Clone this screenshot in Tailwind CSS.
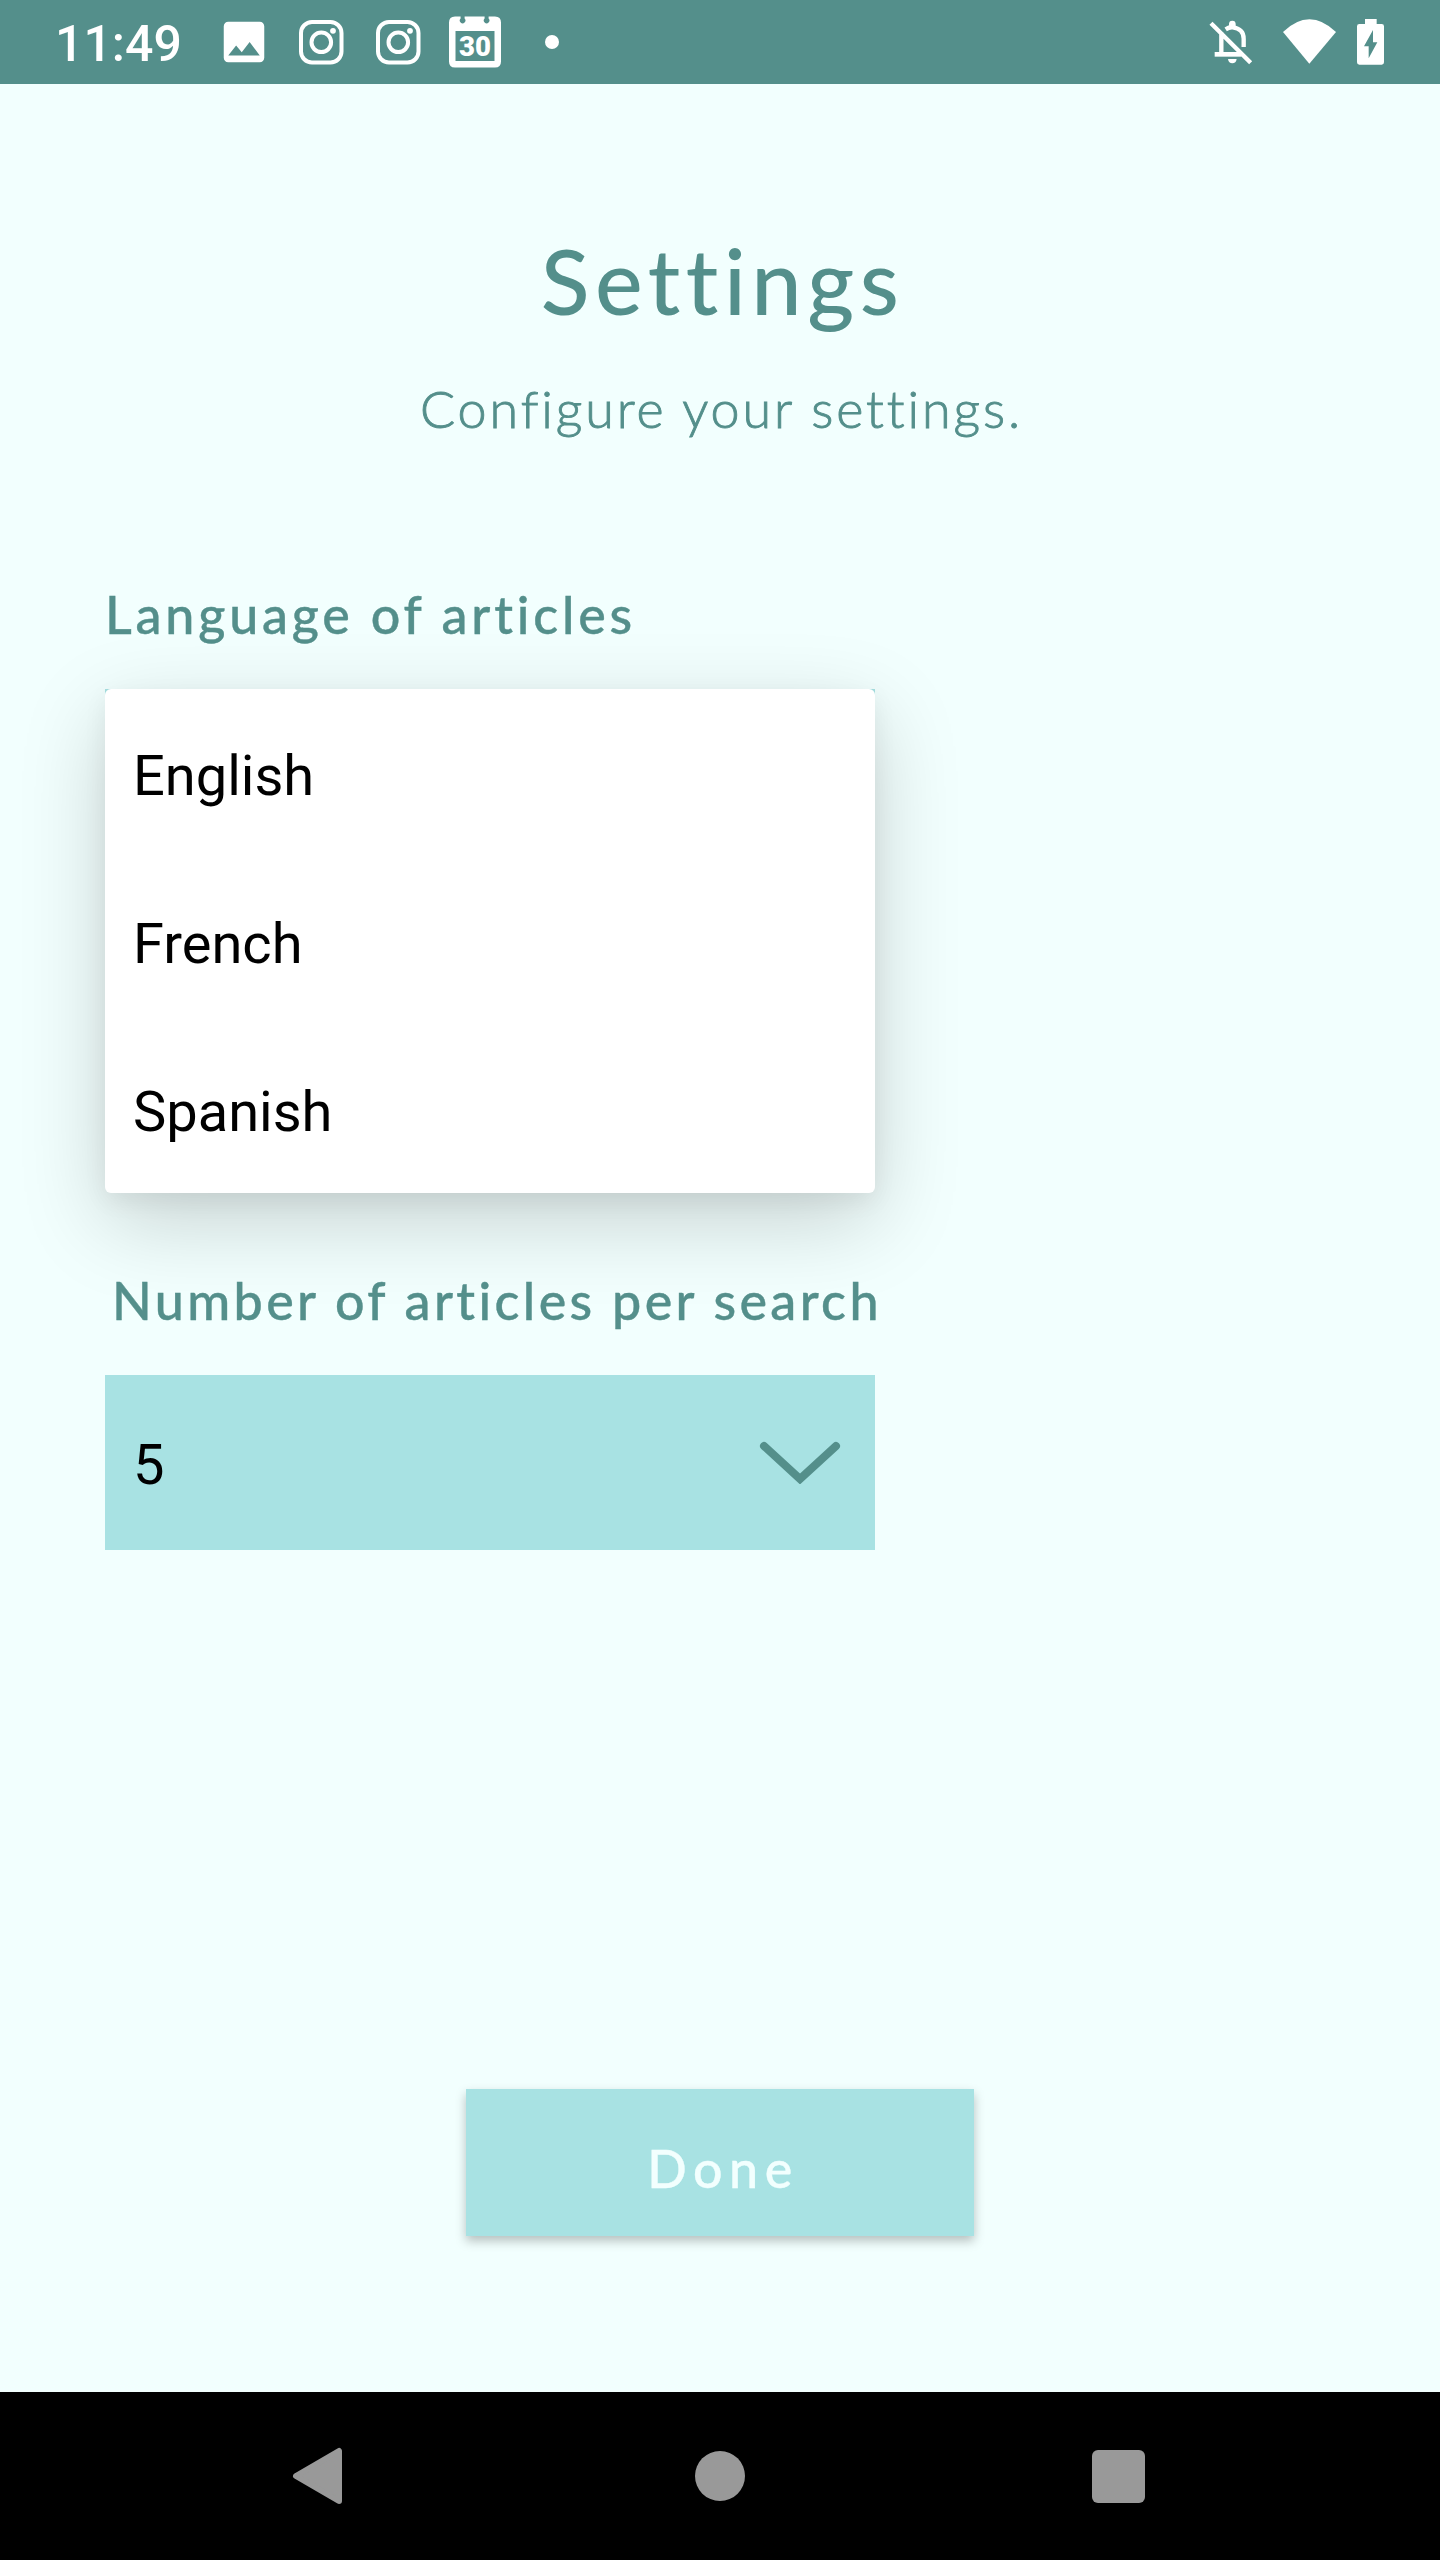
<!DOCTYPE html>
<html lang="en">
<head>
<meta charset="utf-8">
<title>Settings</title>
<script src="https://cdn.jsdelivr.net/npm/@tailwindcss/browser@4"></script>
</head>
<body class="w-[1440px] h-[2560px] flex flex-col overflow-hidden bg-[#f2fffe] font-[Lato,sans-serif] text-[#548f8b]">
  <header class="h-[84px] shrink-0 bg-[#548f8b] text-white flex items-center">
    <span class="ml-[55px] w-[126px] font-[Roboto,sans-serif] font-medium text-[50px] leading-[56px] mt-[3px] whitespace-nowrap">11:49</span>
    <svg class="ml-[36px] size-[54px] -mt-px" viewBox="0 0 24 24" fill="currentColor"><path d="M21 19V5c0-1.1-.9-2-2-2H5c-1.1 0-2 .9-2 2v14c0 1.1.9 2 2 2h14c1.1 0 2-.9 2-2zM8.5 13.5l2.5 3.01L14.5 12l4.5 6H5l3.5-4.5z"/></svg>
    <svg class="ml-[27px] w-[46px] h-[46px]" viewBox="0 0 46 46" fill="none" stroke="currentColor" stroke-width="4"><rect x="3" y="3" width="40.5" height="40.5" rx="11"/><circle cx="23.3" cy="23.3" r="9.8"/><circle cx="35" cy="11.8" r="2.9" fill="currentColor" stroke="none"/></svg>
    <svg class="ml-[31px] w-[46px] h-[46px]" viewBox="0 0 46 46" fill="none" stroke="currentColor" stroke-width="4"><rect x="3" y="3" width="40.5" height="40.5" rx="11"/><circle cx="23.3" cy="23.3" r="9.8"/><circle cx="35" cy="11.8" r="2.9" fill="currentColor" stroke="none"/></svg>
    <svg class="ml-[28px] w-[52px] h-[52px]" viewBox="0 0 52 52" fill="currentColor">
      <path fill-rule="evenodd" d="M6 .5H11.6V2.5A2.8 2.8 0 1 0 15.6 2.5V.5H35.6V2.5A2.8 2.8 0 1 0 39.6 2.5V.5H46Q52 .5 52 6.500V45.500Q52 51.500 46 51.500H6Q0 51.500 0 45.500V6.500Q0 .5 6 .5ZM6.500 15V45H45.500V15Z"/>
      <text x="26" y="39.500" text-anchor="middle" textLength="32" lengthAdjust="spacingAndGlyphs" font-family="Roboto" font-weight="900" font-size="27">30</text>
    </svg>
    <span class="ml-[44px] size-[14px] rounded-full bg-white"></span>
    <svg class="ml-[649px] w-[46px] h-[48px]" viewBox="84 54 138 144" fill="none" stroke="currentColor">
      <path stroke-width="13" d="M93 70L212 188M124 97V163M137 88Q148 81 158 82Q191 86 191 116V141"/>
      <path stroke-width="14" d="M104 163H184"/>
      <path fill="currentColor" stroke="none" d="M147 84V72a10 10 0 0 1 20 0V84ZM144 177H170Q168 190 157 190Q146 190 144 177Z"/>
    </svg>
    <svg class="ml-[29px] w-[53px] h-[45px] -mt-px" viewBox="309 56 159 135" fill="currentColor"><path d="M309 95Q388 19 468 95L388 190Z"/></svg>
    <svg class="ml-[21px] w-[27px] h-[46px]" viewBox="531 57 81 138" fill="currentColor"><path fill-rule="evenodd" d="M555 57H590V72H605Q612 72 612 79V187Q612 194 605 194H538Q531 194 531 187V79Q531 72 538 72H555ZM579 90L552 139H566V175L592 127H579Z"/></svg>
  </header>

  <main class="flex-1 flex flex-col">
    <h1 class="mt-[142px] pl-[5px] text-center text-[90px] leading-[108px] font-medium tracking-[5.5px]">Settings</h1>
    <p class="mt-[43px] pl-[3px] text-center text-[52px] leading-[62px] font-light tracking-[2.9px] [-webkit-text-stroke:0.9px_#548f8b]">Configure your settings.</p>

    <section class="mt-[144px] ml-[105px] w-[770px]">
      <h2 class="text-[52px] leading-[62px] font-medium tracking-[3.8px] whitespace-nowrap [-webkit-text-stroke:0.4px_#548f8b]">Language of articles</h2>
      <div class="mt-[44px] relative h-[175px] bg-[#a8e2e3]">
        <ul class="absolute inset-x-0 top-0 rounded-[6px] bg-white text-black font-[Roboto,sans-serif] text-[56px] leading-[66px] shadow-[0_28px_86px_rgb(0_0_0/0.18),0_8px_24px_rgb(0_0_0/0.06)]">
          <li class="h-[168px] flex items-center pl-7 pt-1.5">English</li>
          <li class="h-[168px] flex items-center pl-7 pt-1.5">French</li>
          <li class="h-[168px] flex items-center pl-7 pt-1.5">Spanish</li>
        </ul>
      </div>
    </section>

    <section class="mt-[405px] ml-[105px] w-[770px] relative">
      <h2 class="pl-[7px] text-[52px] leading-[62px] font-medium tracking-[3.38px] whitespace-nowrap [-webkit-text-stroke:0.4px_#548f8b]">Number of articles per search</h2>
      <div class="mt-[44px] h-[175px] bg-[#a8e2e3] flex items-center justify-between pl-7 pr-[31px]">
        <span class="pt-1 text-black font-[Roboto,sans-serif] text-[56px] leading-[66px]">5</span>
        <svg class="w-[88px] h-[50px] mb-[7px]" viewBox="0 0 88 50" fill="none" stroke="currentColor" stroke-width="8" stroke-linecap="round"><path d="M8 12L44 45L80 12"/></svg>
      </div>
    </section>

    <button class="mt-[539px] self-center w-[508px] h-[147px] bg-[#a8e2e3] text-[#f2fffe] text-[52px] leading-[62px] font-medium tracking-[6.5px] pt-2.5 pl-1.5 shadow-[0_5px_10px_rgb(0_0_0/0.25)] [-webkit-text-stroke:0.4px_#f2fffe]">Done</button>
  </main>

  <nav class="h-[168px] shrink-0 bg-black text-[#999] flex items-center">
    <svg class="ml-[292px] w-[52px] h-[58px]" viewBox="0 0 52 58" fill="currentColor" stroke="currentColor" stroke-width="6" stroke-linejoin="round"><path d="M4 29L47 4V54Z"/></svg>
    <span class="ml-[351px] size-[50px] rounded-full bg-[#999]"></span>
    <span class="ml-[347px] w-[53px] h-[53px] rounded-[6px] bg-[#999]"></span>
  </nav>
</body>
</html>
